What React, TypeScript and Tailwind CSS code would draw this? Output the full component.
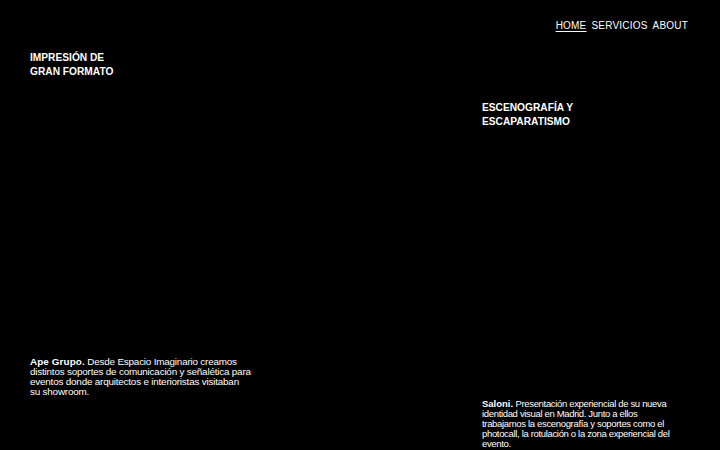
export default function App() {
  return (
    <div className="min-h-screen bg-black text-white font-['Liberation_Sans',Arial,sans-serif] antialiased">
      {/* Nav */}
      <nav className="flex justify-end gap-[5px] pt-[20px] pr-[32px] text-[10px] leading-[12px] tracking-[0.02em]">
        <a className="underline underline-offset-[2px] decoration-1">HOME</a>
        <a>SERVICIOS</a>
        <a>ABOUT</a>
      </nav>

      <main className="grid grid-cols-[452px_1fr] pl-[30px]">
        {/* Left project */}
        <section className="pt-[19px]">
          <h2 className="text-[10.2px] leading-[14px] font-bold">
            IMPRESIÓN DE
            <br />
            GRAN FORMATO
          </h2>
          <p className="mt-[278px] whitespace-nowrap text-[9.9px] leading-[10px] tracking-[-0.02em]">
            <b className="tracking-[0.01em]">Ape Grupo.</b> Desde Espacio Imaginario creamos
            <br />
            distintos soportes de comunicación y señalética para
            <br />
            eventos donde arquitectos e interioristas visitaban
            <br />
            su showroom.
          </p>
        </section>

        {/* Right project */}
        <section className="pt-[69px]">
          <h2 className="text-[10.2px] leading-[14px] font-bold">
            ESCENOGRAFÍA Y
            <br />
            ESCAPARATISMO
          </h2>
          <p className="mt-[270px] whitespace-nowrap text-[9.5px] leading-[10px] tracking-[-0.035em]">
            <b className="tracking-[0em]">Saloni.</b> Presentación experiencial de su nueva
            <br />
            identidad visual en Madrid. Junto a ellos
            <br />
            trabajamos la escenografía y soportes como el
            <br />
            photocall, la rotulación o la zona experiencial del
            <br />
            evento.
          </p>
        </section>
      </main>
    </div>
  );
}
